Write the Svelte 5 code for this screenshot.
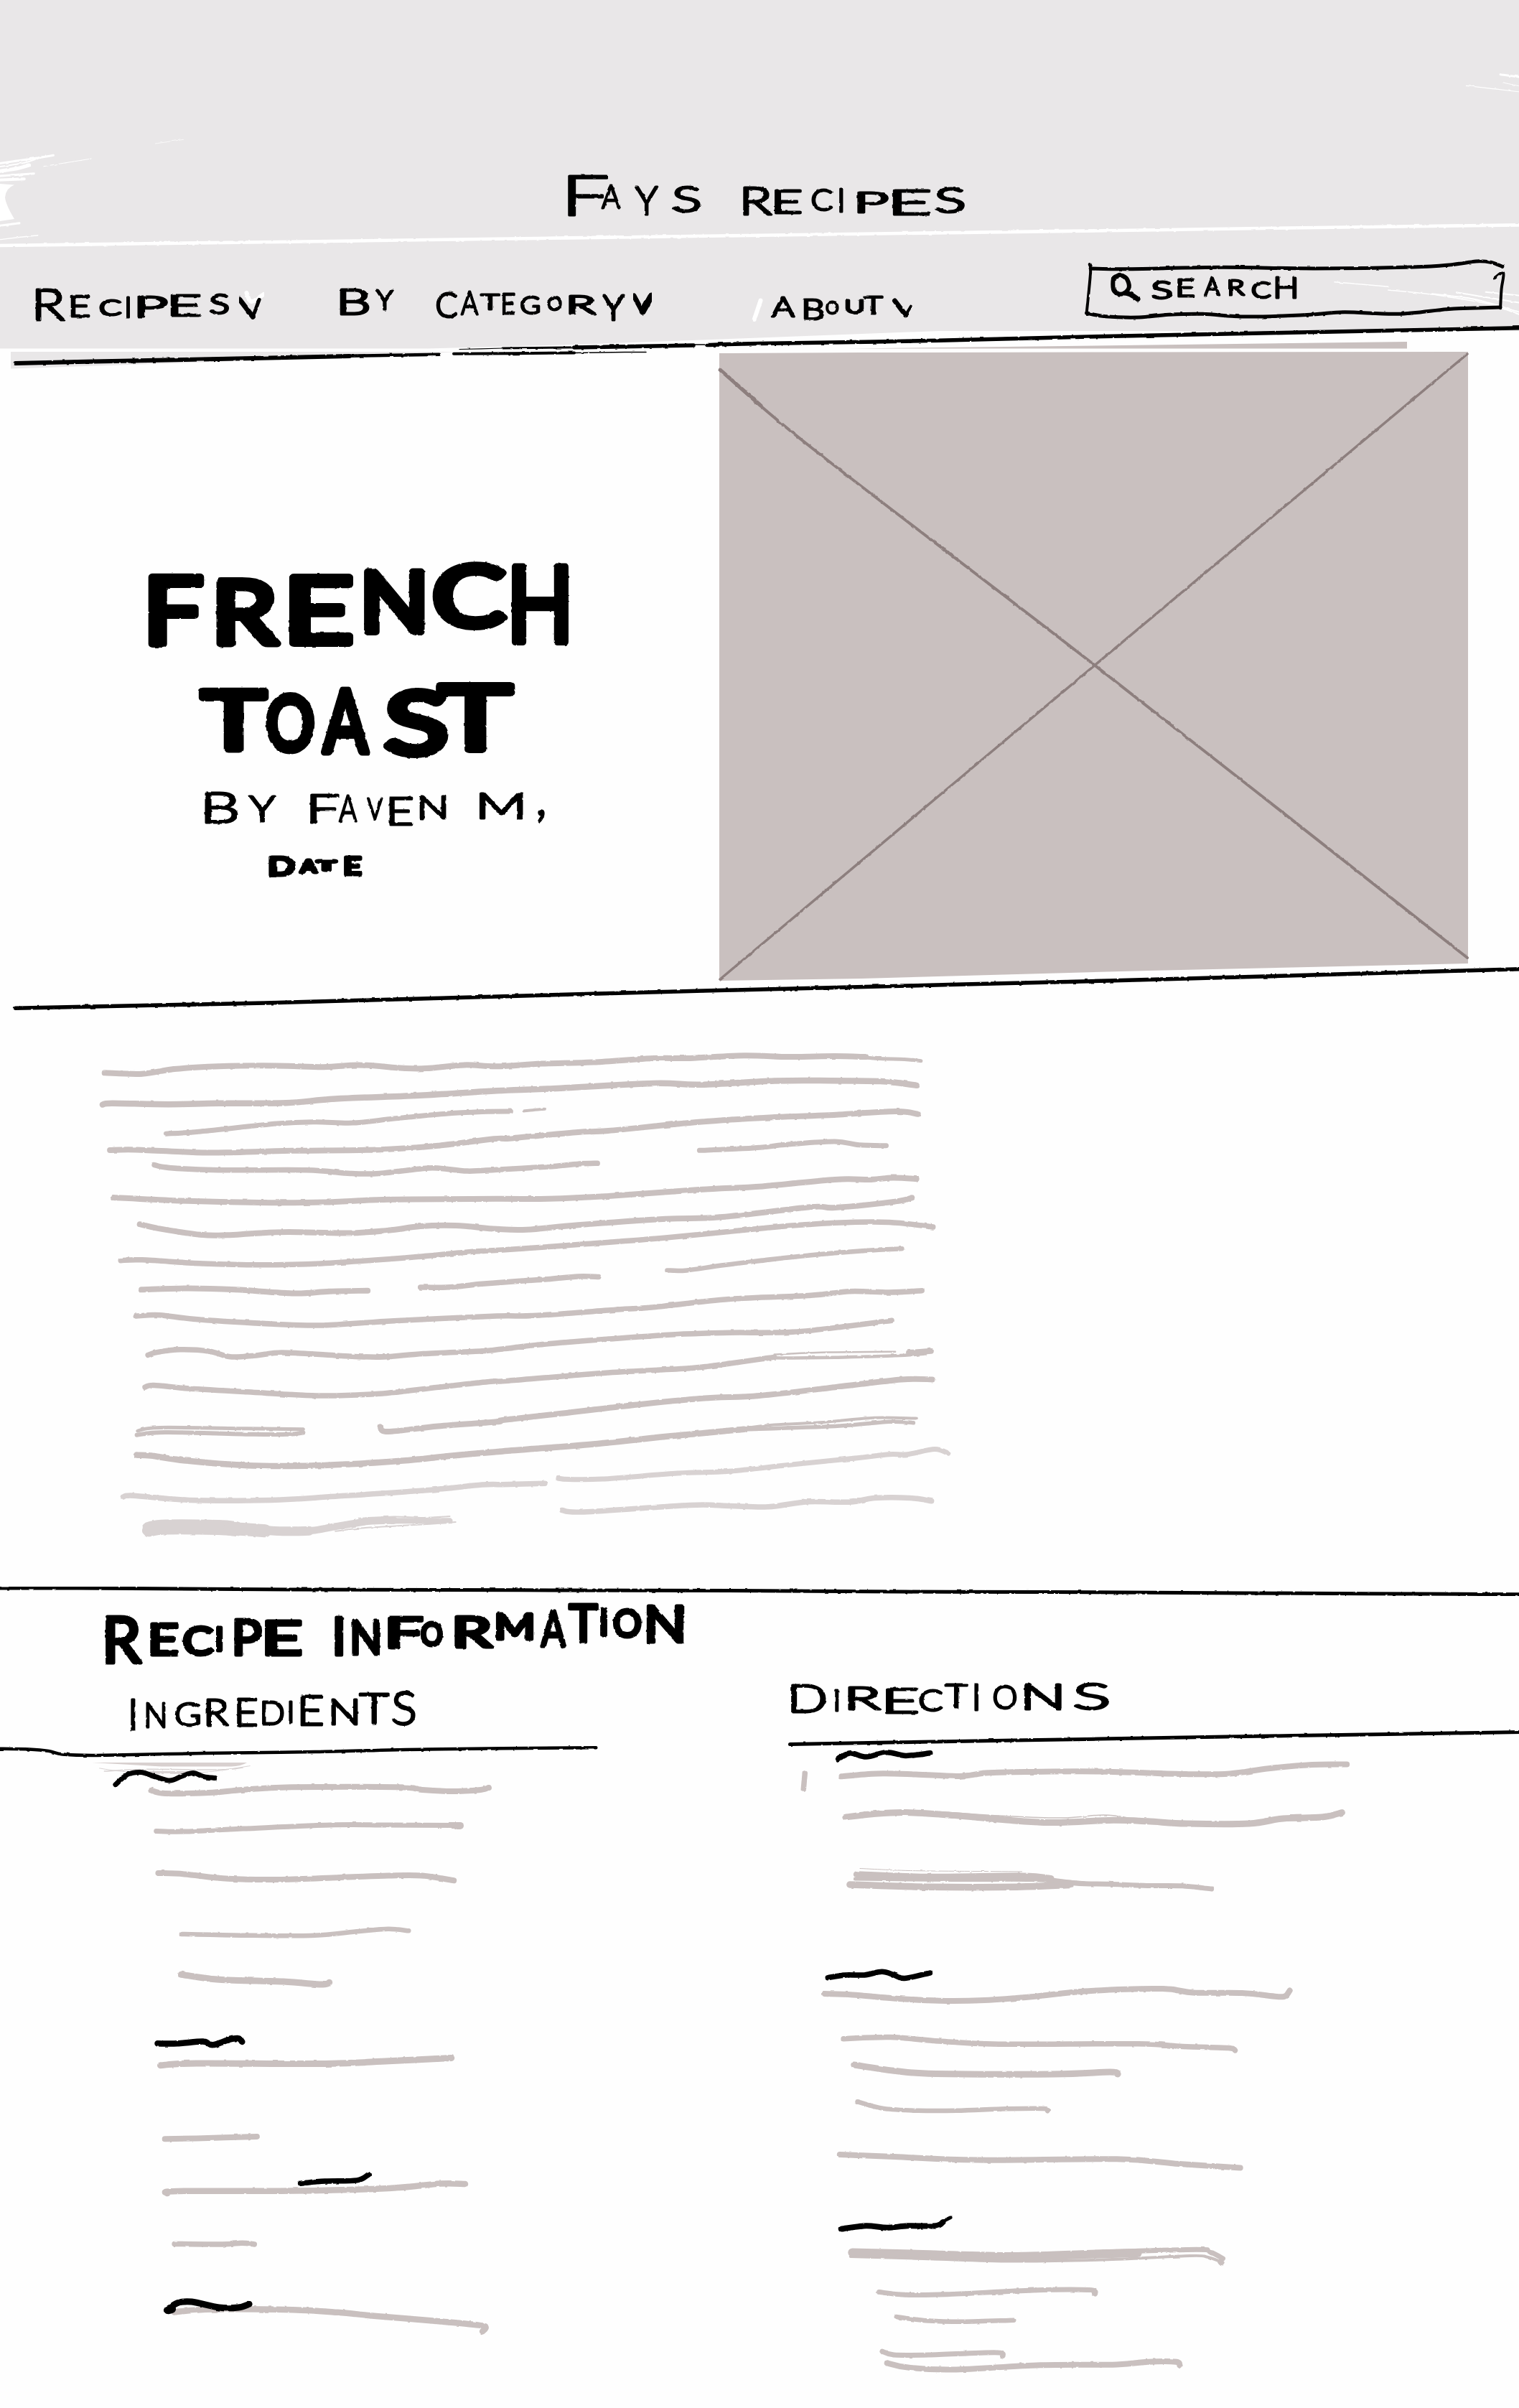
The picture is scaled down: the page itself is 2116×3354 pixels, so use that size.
<script>
  // Drawing grids: page origin (ox, oy) and grid units per pixel (kx, ky).
  const grids = {
    A: [0, 180, 1.479, 3],
    B: [1050, 60, 1.471, 3],
    C: [150, 740, 1.823, 3],
    D: [0, 2190, 1.479, 2.8],
    E: [1060, 2190, 1.485, 2.8],
    F: [140, 2700, 2.24, 2.529],
    G: [1100, 2700, 2.063, 2.398],
    P: [100, 1440, 2.45, 2.119],
    Q: [700, 1440, 2.376, 2.119],
    X: [0, 0, 1, 1]
  };
  const toPage = (g, x, y) => {
    const [ox, oy, kx, ky] = grids[g];
    return [ox + x / kx, oy + y / ky];
  };
  const r = (n) => Math.round(n * 10) / 10;

  // Turns "A:x,y x,y B:x,y" into one smooth path in page pixels.
  function curve(src) {
    let g = 'A';
    const p = src.trim().split(/\s+/).map((t) => {
      if (t[1] === ':') { g = t[0]; t = t.slice(2); }
      const [x, y] = t.split(',').map(Number);
      return toPage(g, x, y);
    });
    let d = `M${r(p[0][0])} ${r(p[0][1])}`;
    for (let i = 0; i < p.length - 1; i++) {
      const a = p[i - 1] || p[i], b = p[i], c = p[i + 1], e = p[i + 2] || c;
      d += `C${r(b[0] + (c[0] - a[0]) / 6)} ${r(b[1] + (c[1] - a[1]) / 6)} ${r(c[0] - (e[0] - b[0]) / 6)} ${r(c[1] - (e[1] - b[1]) / 6)} ${r(c[0])} ${r(c[1])}`;
    }
    return d;
  }
  const strokes = (list) => list.map(([tone, width, src]) => ({ tone, width, d: curve(src) }));

  // Side bearings as a share of each capital's advance width.
  const bearings = {
    A: [0.01, 0.01], B: [0.14, 0.06], C: [0.07, 0.05], D: [0.12, 0.06], E: [0.15, 0.08],
    F: [0.15, 0.06], G: [0.06, 0.1], H: [0.12, 0.12], M: [0.1, 0.1], N: [0.12, 0.12],
    O: [0.06, 0.06], P: [0.14, 0.05], R: [0.14, 0.02], S: [0.07, 0.08], T: [0.03, 0.03],
    U: [0.11, 0.11], V: [0.01, 0.01], Y: [0.01, 0.01]
  };
  // "F 10 40 5 60" places a capital between x 10..40 and y 5..60;
  // inset leaves room for the outline drawn round each letter.
  function letters(g, src, inset = 1.5) {
    return src.split(';').map((item) => {
      const [ch, a, b, c, d] = item.trim().split(/\s+/);
      let [x0, y0] = toPage(g, +a, +c);
      let [x1, y1] = toPage(g, +b, +d);
      x0 += inset; x1 -= inset; y0 += inset; y1 -= inset;
      if (ch === ',') return { ch, x: r((x0 + x1) / 2), y: r(y1 - 5), size: 72, len: undefined, anchor: 'middle' };
      const size = r((y1 - y0) / 0.72);
      if (ch === 'I') return { ch, x: r((x0 + x1) / 2), y: r(y1), size, len: undefined, anchor: 'middle' };
      const [l, rt] = bearings[ch];
      const adv = (x1 - x0) / (1 - l - rt);
      return { ch, x: r(x0 - l * adv), y: r(y1), size, len: r(adv), anchor: 'start' };
    });
  }

  const brand = [
    letters('A', 'F 1168 1252 190 365;A 1238 1280 228 333;Y 1307 1357 232 362;S 1386 1443 232 348'),
    letters('B', 'R -23 38 597 722;E 42 97 608 715;C 118 162 605 702;I 172 186 605 710;P 212 275 620 712;E 285 360 610 722;S 372 432 603 712')
  ];
  const nav = [
    {
      box: '40 360 380 100', width: 380,
      words: [letters('A', 'R 72 135 662 802;E 145 185 688 788;C 205 250 708 782;I 258 270 698 790;P 283 345 692 786;E 352 413 686 783;S 432 472 686 774')],
      marks: strokes([['white', 6, 'A:508,684 518,720 543,690'], ['ink', 7, 'A:494,712 521,784'], ['ink', 5, 'A:521,784 534,712']])
    },
    {
      box: '460 360 540 100', width: 540,
      words: [
        letters('A', 'B 700 762 664 778;Y 773 812 668 757'),
        letters('A', 'C 898 943 680 790;A 948 987 672 778;T 990 1030 685 757;E 1034 1062 680 775;G 1072 1112 695 775;O 1127 1158 697 760;R 1172 1228 688 775;Y 1240 1288 688 802')
      ],
      marks: strokes([['ink', 7, 'A:1306,696 1324,764'], ['ink', 9, 'A:1324,762 1342,696']])
    },
    {
      box: '1040 360 260 100', width: 260,
      words: [letters('B', 'A 35 85 1058 1148;B 102 145 1065 1160;O 147 175 1075 1135;U 188 225 1068 1132;T 225 265 1054 1136')],
      marks: strokes([['white', 6, 'B:14,1076 1,1155'], ['ink', 7, 'B:289,1077 311,1136'], ['ink', 4, 'B:311,1136 322,1100']])
    }
  ];
  const searchWord = [letters('B', 'S 815 857 990 1072;E 868 903 982 1062;A 922 957 977 1058;R 972 1007 982 1056;C 1020 1060 992 1068;H 1068 1113 972 1070')];
  const searchFrame = strokes([
    ['ink', 5, 'B:690,942 770,944 960,937 1150,942 1350,936 1430,926 1480,912 1510,916 1534,934'],
    ['ink', 4, 'B:688,924 690,960 682,1130'],
    ['ink', 5, 'B:682,1128 720,1142 790,1146 850,1135 920,1132 1010,1143 1140,1135 1210,1124 1320,1132 1420,1112 1480,1107 1530,1104'],
    ['ink', 4, 'B:1518,982 1536,960 1532,1030 1530,1108'],
    ['ink', 6, 'B:746,972 737,985 737,1030 745,1046 758,1046 769,1020 764,984 752,969 746,972'],
    ['ink', 7, 'B:762,1044 772,1050 787,1070']
  ]);
  const headerStrokes = strokes([
    ['white', 4.6, 'A:-5,486 300,478 600,470 1568,443 B:850,780 1040,774 1575,760'],
    ['white', 3, 'A:-5,144 70,122 110,109'], ['white', 5, 'A:-5,176 35,164 60,150'],
    ['white', 2, 'A:-5,158 50,140 75,124'], ['white', 3, 'A:-5,196 70,185'],
    ['white', 4, 'A:-5,212 50,208'], ['white', 3, 'A:-5,404 40,392'],
    ['white', 1.4, 'A:-5,462 78,443'], ['white', 1, 'A:90,155 188,123'], ['white', 0.7, 'A:320,60 378,43'],
    ['white', 3, 'B:1530,131 1570,142'], ['white', 1.2, 'B:1460,178 1570,204'], ['white', 1, 'B:1535,165 1570,180'],
    ['white', 1.5, 'B:1190,998 1300,1018'], ['white', 1.5, 'B:1300,1032 1400,1053 1530,1098'],
    ['white', 2, 'B:1390,1048 1480,1072 1570,1125'], ['white', 2, 'B:1440,1042 1570,1085'],
    ['white', 2, 'B:1500,1040 1570,1055'], ['white', 2, 'B:1525,1100 1570,1135'],
    ['ink', 1.2, 'X:640,486.5 700,485'], ['ink', 3, 'X:700,485 830,483.5'],
    ['ink', 5.5, 'X:800,484 966,481'], ['ink', 1.5, 'X:960,480 990,480'],
    ['ink', 5.5, 'X:985,480.5 1057,478.5 B:380,1243 700,1226 1100,1210 1575,1190'],
    ['ink', 6, 'A:32,978 250,968 520,957 720,948'], ['ink', 4.5, 'A:720,947 905,941'],
    ['ink', 4, 'X:632,492.8 800,491.5'], ['ink', 1.5, 'X:800,491.5 870,490.5 900,490.5']
  ]);
  const title = [
    { cls: 'bold', box: '180 770 660 150', h: 150, words: [letters('C', 'F 103 243 175 485;R 277 437 193 487;E 463 620 178 483;N 652 804 155 435;C 828 1010 130 410;H 1025 1172 135 478', 5)] },
    { cls: 'bold', box: '180 920 660 150', h: 150, words: [letters('C', 'T 235 405 655 928;O 400 527 675 930;A 540 668 652 940;S 705 862 655 946;T 838 1030 630 928', 5)] },
    {
      cls: 'pen', box: '180 1070 660 95', h: 95,
      words: [letters('C', 'B 246 333 1086 1222;Y 358 428 1100 1217'), letters('C', 'F 513 587 1094 1222;A 585 635 1098 1217;V 657 700 1112 1208;E 714 775 1105 1230;N 792 860 1100 1203'), letters('C', 'M 944 1055 1086 1203;, 1090 1112 1147 1203')]
    },
    { cls: 'medium', box: '180 1165 660 65', h: 65, words: [letters('C', 'D 413 474 1360 1442;A 488 532 1370 1430;T 533 578 1372 1420;E 603 643 1360 1438')] }
  ];
  const heroRule = strokes([['ink', 5.5, 'C:-234,1993 400,1971 1513,1920 2542,1878 3590,1829']]);
  const photoLines = strokes([
    ['cross', 5, 'X:1003,515 1060,565'],
    ['cross', 4, 'X:1003,515 1131,624 1525,926.6 2044,1334'],
    ['cross', 3.5, 'X:1003,1364 1525,926.6 2044,493']
  ]);

  const prose = strokes([
    ['dim', 8, 'P:112,115 240,118 350,104 500,96 700,94 860,98 980,92 1130,101 1210,102 1340,92 1450,96 Q:130,88 300,84 500,72 620,72 800,64 950,68 1100,66 1200,68'],
    ['dim', 5, 'Q:1150,67 1250,73 1330,75 1385,80'],
    ['dim', 8.5, 'P:105,209 140,205 330,208 500,205 730,204 900,192 1200,181 1450,168 Q:150,162 500,146 650,150 900,139 1050,138 1250,140 1370,152'],
    ['dim', 7, 'P:322,295 440,288 700,265 830,260 960,263 1100,250 1270,236 1400,230 1498,229'],
    ['dim', 4, 'Q:70,228 100,225 140,222'],
    ['dim', 8, 'P:130,343 220,342 420,350 540,350 750,345 1040,342 1250,330 1440,310 Q:30,308 250,290 350,286 650,260 900,246 1080,240 1300,229 1375,237'],
    ['dim', 7.5, 'P:282,387 330,395 500,402 800,402 950,412 1050,412 1200,397 1260,397 1350,405 1450,401 Q:150,392 250,384 314,382'],
    ['dim', 7, 'Q:652,344 830,337 950,326 1100,318 1180,328 1270,330'],
    ['dim', 8, 'P:142,483 350,492 640,498 860,497 1080,489 1450,487 Q:150,487 350,479 650,460 860,450 1100,430 1220,430 1290,425 1370,428'],
    ['dim', 8, 'P:232,562 300,575 440,593 530,594 620,589 740,585 940,588 1080,580 1190,568 1310,566 1450,576 Q:80,578 250,564 540,546 720,541 1020,511 1100,513 1300,495 1355,484'],
    ['dim', 7.5, 'P:167,669 240,667 450,678 640,682 850,678 1180,658 1350,644 Q:0,638 280,620 540,602 880,572 1100,558 1280,556 1425,570'],
    ['dim', 8, 'P:238,755 400,751 560,755 760,766 880,760 1010,758'],
    ['dim', 7.5, 'P:1190,748 1280,748 1400,738 Q:50,730 150,724 250,716 318,717'],
    ['dim', 6.5, 'Q:545,698 610,698 740,682 980,657 1200,640 1322,634'],
    ['dim', 7.5, 'P:221,833 300,830 430,843 700,857 860,860 1100,847 1450,833 Q:100,832 380,814 500,807 750,783 1020,772 1150,760 1280,763 1388,758'],
    ['dim', 7.5, 'P:260,948 290,940 370,932 470,937 540,953 630,949 720,941 900,949 1050,954 1200,944 1400,936 Q:0,930 150,915 380,899 600,886 750,882 960,880 1150,862 1288,846'],
    ['dim', 7.5, 'P:250,1043 280,1037 400,1047 600,1057 850,1068 1050,1062 1250,1043 1430,1026 Q:20,1024 350,1000 620,987 750,973 900,954'],
    ['dim', 4.5, 'Q:880,956 960,957 1100,955 1300,950 1400,944'], ['dim', 2.5, 'Q:900,946 1080,940 1300,938'], ['dim', 8, 'Q:1345,941 1418,936'],
    ['dim', 6, 'P:222,1184 320,1176 620,1182 740,1182 790,1177'], ['dim', 5, 'P:225,1172 300,1162 600,1165 790,1167'],
    ['dim', 8, 'P:1053,1160 1080,1174 1250,1158 1450,1145 Q:0,1140 180,1122 420,1097 660,1076 850,1068 1100,1043 1320,1020 1422,1020'],
    ['dim', 8.5, 'P:221,1243 270,1245 390,1260 600,1274 800,1275 950,1270 1130,1260 1300,1245 Q:0,1232 300,1211 550,1188 800,1167'],
    ['dim', 5.5, 'Q:780,1168 1100,1158 1280,1145 1360,1148'], ['dim', 4, 'Q:780,1166 900,1154 1050,1147 1230,1133 1368,1135'],
    ['faint', 7.5, 'P:175,1367 210,1363 400,1376 680,1376 900,1365 1200,1348 1400,1331 Q:0,1330 140,1327'],
    ['faint', 7, 'Q:185,1312 220,1315 330,1314 580,1297 750,1291 950,1272 1180,1251 1280,1241 1340,1241 1430,1226 1475,1238'],
    ['faint', 21, 'P:264,1462 320,1456 500,1457 560,1461'], ['faint', 18, 'P:540,1460 620,1464 660,1467'], ['faint', 13, 'P:640,1464 720,1468 810,1467'],
    ['faint', 10, 'P:760,1466 820,1466 900,1454 1010,1439 1100,1436'], ['faint', 8, 'P:1050,1438 1200,1437 1290,1437'],
    ['faint', 2, 'P:900,1468 1000,1458 1200,1448 1310,1441'], ['faint', 2, 'P:980,1430 1100,1425 1200,1428 1290,1424'],
    ['faint', 7.5, 'Q:197,1406 270,1411 620,1391 750,1393 880,1396 1010,1381 1150,1382 1230,1370 1350,1370 1420,1379']
  ]);

  const infoRule = strokes([['ink', 5, 'D:-5,62 160,62 600,67 1568,72 E:300,76 600,77 1000,81 1575,86']]);
  const infoTitle = [
    letters('D', 'R 217 293 168 360;E 310 367 192 328;C 377 440 205 328;I 447 457 210 312;P 482 540 178 330;E 547 620 183 328', 2.5),
    letters('D', 'I 691 706 170 328;N 725 783 180 325;F 800 870 170 302;O 866 913 190 292;R 938 1015 168 298;M 1023 1098 158 268;A 1112 1168 143 295;T 1170 1233 120 278;I 1239 1249 135 250;O 1263 1322 142 260;N 1333 1408 125 278', 2.5)
  ];
  const ingredients = [letters('D', 'I 267 281 490 620;N 300 342 503 608;G 360 412 503 602;R 424 472 490 600;E 487 530 488 603;D 539 586 497 598;I 595 603 495 588;E 618 666 478 600;N 682 738 490 598;T 740 802 468 593;S 808 857 463 598')];
  const directions = [letters('E', 'D 62 135 435 550;I 152 162 455 545;R 180 248 443 540;E 258 324 447 552;C 327 376 455 545;T 380 428 431 530;I 441 451 430 542;O 480 530 437 535;N 545 622 430 538;S 648 720 427 540')];

  const ingredientLines = strokes([
    ['ink', 4.5, 'D:-5,688 60,690 100,697 130,710 200,714 420,706 650,700 880,690 1228,684'],
    ['faint', 1, 'D:205,764 250,776 340,785 430,778 515,755'], ['faint', 1.5, 'D:215,776 300,768 450,770 500,762'], ['faint', 3, 'D:310,779 390,780'],
    ['ink', 7, 'D:238,828 262,790 290,780 320,797 350,812 375,795 398,783 420,797 443,802'],
    ['dim', 8, 'D:312,851 340,862 430,860 500,848 600,838 820,838 870,848 930,854 990,848 1007,840'],
    ['dim', 7, 'D:322,1009 380,1011 500,1000 690,985 800,986 945,987'], ['dim', 10, 'D:942,988 948,988'],
    ['dim', 8, 'D:326,1173 380,1177 470,1195 580,1198 700,1190 800,1183 870,1183 935,1202'],
    ['dim', 6.5, 'D:374,1411 480,1415 640,1417 740,1400 800,1391 842,1398'],
    ['dim', 9, 'F:252,127 370,145 570,152 690,162 714,155'],
    ['ink', 8.5, 'F:178,370 240,370 320,363 350,375 400,357 430,352 442,364'],
    ['dim', 9, 'F:187,447 300,440 700,441 900,432 1095,421'],
    ['dim', 8, 'F:201,706 300,704 488,698'],
    ['ink', 7.5, 'F:624,863 700,855 800,852 836,832'],
    ['dim', 8.5, 'F:208,898 240,890 600,889 900,880 1060,864 1138,865'],
    ['dim', 7.5, 'F:231,1076 380,1077 440,1073 480,1077'],
    ['dim', 8.5, 'F:230,1316 350,1306 600,1308 740,1317 860,1330 1050,1348 1180,1362 1202,1370 1192,1384'],
    ['ink', 9, 'F:207,1310 240,1284 285,1280 370,1300 430,1300 464,1288'], ['ink', 12, 'F:212,1308 222,1305']
  ]);
  const directionLines = strokes([
    ['ink', 5, 'E:60,671 400,659 700,650 1100,637 1575,623'],
    ['ink', 7.5, 'E:160,728 185,705 218,720 260,702 300,715 350,705'],
    ['dim', 8, 'E:167,796 240,785 320,788 410,795 470,782 560,778 700,777 880,787 970,785 1050,765 1140,750 1212,749'],
    ['dim', 7.5, 'E:91,784 88,846'],
    ['dim', 9, 'E:175,955 230,943 300,937 400,948 500,965 600,976 720,967 800,971 880,980 1010,980 1080,960 1160,955 1202,937'],
    ['dim', 1.5, 'E:370,934 500,950 620,958 710,946 760,958'],
    ['dim', 9.5, 'E:184,1218 350,1227 530,1227 640,1219'], ['dim', 9, 'E:198,1178 350,1188 540,1184 600,1194'],
    ['dim', 5, 'E:195,1196 400,1200 560,1200 670,1212'], ['dim', 1, 'E:205,1155 320,1164 540,1167'],
    ['dim', 7, 'E:560,1190 650,1212 720,1216 800,1222 870,1223 932,1235'],
    ['ink', 7.5, 'G:110,131 160,122 215,122 265,111 300,122 330,133 403,115'],
    ['dim', 8, 'G:99,185 180,188 300,200 430,208 560,206 700,194 850,176 1070,168 1160,181 1300,182 1400,194 1425,192 1437,174'],
    ['dim', 7.5, 'G:155,335 290,330 430,343 600,353 1000,352 1130,361 1260,366 1280,374'],
    ['dim', 9, 'G:185,422 300,442 420,452 760,453 920,446 943,453'],
    ['dim', 6.5, 'G:195,545 270,568 370,575 480,575 620,569 730,568 741,576'],
    ['dim', 8, 'G:144,722 300,729 540,740 940,737 1120,753 1295,766'],
    ['ink', 8, 'G:150,970 220,960 280,966 340,960 420,960 440,948'], ['ink', 4.5, 'G:420,958 463,932'],
    ['dim', 12, 'G:180,1049 350,1054 620,1062 850,1055 1000,1050'], ['dim', 7, 'G:900,1048 1170,1039 1210,1048 1245,1069'],
    ['dim', 4, 'G:175,1062 400,1070 640,1078 900,1073 1150,1060 1200,1064 1240,1080'], ['dim', 8, 'G:1238,1080 1241,1084'],
    ['dim', 7, 'G:257,1181 330,1190 450,1189 700,1175 860,1174 878,1187'],
    ['dim', 6.5, 'G:307,1264 400,1277 500,1280 644,1275'],
    ['dim', 7, 'G:266,1379 300,1391 400,1391 590,1383 613,1394'],
    ['dim', 8, 'G:280,1418 340,1433 470,1440 720,1425 940,1423 1030,1414 1110,1414 1121,1426']
  ]);
</script>

{#snippet ink(list)}
  <g class="strokes">
    {#each list as s}
      <path class={s.tone} d={s.d} stroke-width={s.width} />
    {/each}
  </g>
{/snippet}

{#snippet lettering(words)}
  {#each words as word}
    <text>{#each word as l}<tspan x={l.x} y={l.y} font-size={l.size} textLength={l.len} lengthAdjust="spacingAndGlyphs" text-anchor={l.anchor}>{l.ch}</tspan>{/each}</text>
  {/each}
{/snippet}

<svg class="defs" width="0" height="0" aria-hidden="true">
  <filter id="rough" x="-2%" y="-20%" width="104%" height="140%">
    <feTurbulence type="fractalNoise" baseFrequency="0.12" numOctaves="2" seed="4" />
    <feDisplacementMap in="SourceGraphic" scale="2.6" xChannelSelector="R" yChannelSelector="G" />
  </filter>
</svg>

<main class="page">
  <header>
    <svg class="backdrop" viewBox="0 0 2116 530" width="2116" height="530" aria-hidden="true">
      <path class="band" d="M0 0H2116V461H1308L1050 470.7L800 480L595 485.5H0Z" />
      <path class="band" d="M15 490H640L300 504L15 513.5Z" />
      <path class="strip" d="M1960 476V485.5H1180L1400 483Z" />
      <path class="blob" d="M0 256L20 257.500Q8 262 7 275Q8 285 20 305L0 308Z" />
      {@render ink(headerStrokes)}
    </svg>
    <div class="masthead">
      <svg class="pen brand" viewBox="768 236 580 76" width="580" height="76">{@render lettering(brand)}</svg>
    </div>
    <nav>
      {#each nav as item}
        <svg class="pen" viewBox={item.box} width={item.width} height="100">
          {@render lettering(item.words)}
          {@render ink(item.marks)}
        </svg>
      {/each}
      <svg class="pen search" viewBox="1500 360 606 100" width="606" height="100">
        {@render ink(searchFrame)}
        {@render lettering(searchWord)}
      </svg>
    </nav>
  </header>

  <section class="hero">
    <div class="headline">
      {#each title as line}
        <svg class={line.cls} viewBox={line.box} width="660" height={line.h}>{@render lettering(line.words)}</svg>
      {/each}
    </div>
    <svg class="photo" viewBox="1002 486 1044 890" width="1044" height="890">
      <path class="strip" d="M1002 492L1200 491L2045 490V1342L1600 1352L1200 1363L1002 1366Z" />
      {@render ink(photoLines)}
    </svg>
    <svg class="rule" viewBox="0 1340 2116 80" width="2116" height="80" aria-hidden="true">{@render ink(heroRule)}</svg>
  </section>

  <section class="intro">
    <svg viewBox="100 1440 1300 740" width="1300" height="740">{@render ink(prose)}</svg>
  </section>

  <section class="info">
    <svg viewBox="0 2200 2116 30" width="2116" height="30" aria-hidden="true">{@render ink(infoRule)}</svg>
    <svg class="info-title medium" viewBox="100 2230 900 100" width="900" height="100">{@render lettering(infoTitle)}</svg>
    <div class="columns">
      <div class="column">
        <svg class="pen" viewBox="0 2330 1000 90" width="1000" height="90">{@render lettering(ingredients)}</svg>
        <svg viewBox="0 2420 1000 934" width="1000" height="934">
          <path class="smudge" d="M128 2455H344Q336 2460 322 2460.500H225L190 2458.500Z" />
          {@render ink(ingredientLines)}
        </svg>
      </div>
      <div class="column">
        <svg class="pen" viewBox="1000 2330 1116 90" width="1116" height="90">{@render lettering(directions)}</svg>
        <svg viewBox="1000 2420 1116 934" width="1116" height="934">{@render ink(directionLines)}</svg>
      </div>
    </div>
  </section>
</main>

<style>
  :global(body) {
    margin: 0;
    background: #fefefe;
  }
  .defs {
    position: absolute;
  }
  svg {
    display: block;
    flex: none;
    overflow: visible;
  }
  .page {
    width: 2116px;
    height: 3354px;
    overflow: hidden;
    display: flex;
    flex-direction: column;
    font-family: Lato, "Open Sans", sans-serif;
  }
  header {
    position: relative;
    z-index: 1;
    height: 486px;
    display: flex;
    flex-direction: column;
  }
  .backdrop {
    position: absolute;
    inset: 0;
  }
  .masthead {
    position: relative;
    height: 340px;
    box-sizing: border-box;
    padding-top: 236px;
    display: flex;
    justify-content: center;
  }
  nav {
    position: relative;
    display: flex;
    gap: 40px;
    padding: 20px 10px 0 40px;
  }
  .search {
    margin-left: auto;
  }
  .hero {
    position: relative;
    height: 924px;
    display: grid;
    grid-template-columns: 1002px 1fr;
  }
  .headline {
    padding: 284px 0 0 180px;
    display: flex;
    flex-direction: column;
  }
  .rule {
    position: absolute;
    left: 0;
    bottom: -10px;
  }
  .intro {
    height: 760px;
    padding: 30px 100px 0;
  }
  .info {
    display: flex;
    flex-direction: column;
  }
  .info-title {
    margin-left: 100px;
  }
  .columns {
    display: grid;
    grid-template-columns: 1000px 1fr;
  }
  text {
    fill: #050505;
    stroke: #050505;
    stroke-linejoin: round;
    stroke-linecap: round;
    font-weight: 400;
    filter: url(#rough);
  }
  .pen text {
    font-weight: 300;
    stroke-width: 3;
  }
  .bold text {
    stroke-width: 10;
  }
  .medium text {
    stroke-width: 5;
  }
  .strokes {
    fill: none;
    stroke-linecap: round;
    stroke-linejoin: round;
    filter: url(#rough);
  }
  .ink {
    stroke: #060606;
  }
  .white {
    stroke: #fff;
  }
  .dim {
    stroke: #c9c0bf;
  }
  .faint {
    stroke: #d8d2d2;
  }
  .cross {
    stroke: #8d7f7e;
  }
  .band {
    fill: #e9e7e8;
  }
  .strip {
    fill: #c9c0bf;
  }
  .blob {
    fill: #fff;
  }
  .smudge {
    fill: #d8d0cf;
  }
</style>
